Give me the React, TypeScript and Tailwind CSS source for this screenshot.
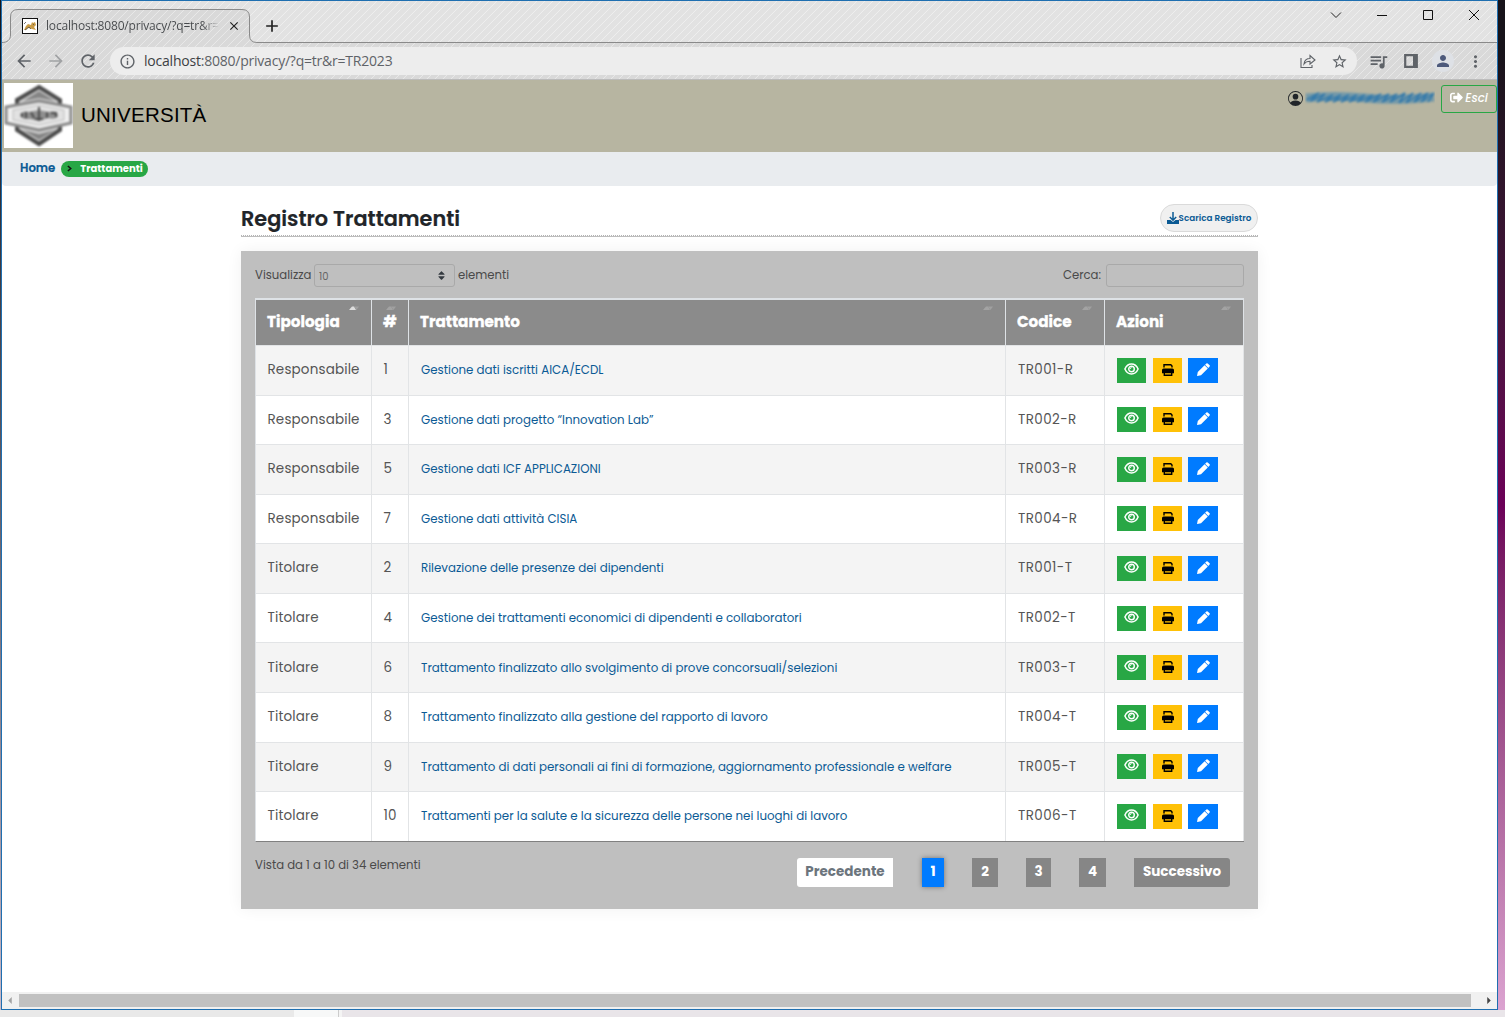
import React, { type ReactNode } from 'react';
import { BsPersonCircle } from 'react-icons/bs';
import { FaSignOutAlt, FaSort } from 'react-icons/fa';
import { MdArrowBack, MdArrowForward, MdRefresh, MdInfoOutline, MdStarBorder, MdQueueMusic, MdPerson, MdMoreVert, MdClose, MdAdd } from 'react-icons/md';

type Row = { kind: string; id: number; name: string; code: string };

const rows: Row[] = [
  { kind: 'Responsabile', id: 1, name: 'Gestione dati iscritti AICA/ECDL', code: 'TR001-R' },
  { kind: 'Responsabile', id: 3, name: 'Gestione dati progetto “Innovation Lab”', code: 'TR002-R' },
  { kind: 'Responsabile', id: 5, name: 'Gestione dati ICF APPLICAZIONI', code: 'TR003-R' },
  { kind: 'Responsabile', id: 7, name: 'Gestione dati attività CISIA', code: 'TR004-R' },
  { kind: 'Titolare', id: 2, name: 'Rilevazione delle presenze dei dipendenti', code: 'TR001-T' },
  { kind: 'Titolare', id: 4, name: 'Gestione dei trattamenti economici di dipendenti e collaboratori', code: 'TR002-T' },
  { kind: 'Titolare', id: 6, name: 'Trattamento finalizzato allo svolgimento di prove concorsuali/selezioni', code: 'TR003-T' },
  { kind: 'Titolare', id: 8, name: 'Trattamento finalizzato alla gestione del rapporto di lavoro', code: 'TR004-T' },
  { kind: 'Titolare', id: 9, name: 'Trattamento di dati personali ai fini di formazione, aggiornamento professionale e welfare', code: 'TR005-T' },
  { kind: 'Titolare', id: 10, name: 'Trattamenti per la salute e la sicurezza delle persone nei luoghi di lavoro', code: 'TR006-T' },
];

const grid = 'grid grid-cols-[116px_37px_597px_99px_139px]';

function SortMark({ active = false }: { active?: boolean }) {
  return (
    <svg viewBox="0 0 10 4" className="absolute right-[12px] top-[6px] h-[4px] w-[10px]">
      <path d="M0 4 L3 0.5 H5 L7 4Z" fill={active ? '#dedede' : '#a3a3a3'} />
      <path d="M5 0.5 H10 L7.5 4Z" fill="#a0a0a0" />
    </svg>
  );
}

function Head({ children, active }: { children: ReactNode; active?: boolean }) {
  return (
    <div className="relative flex items-center border-r border-[#dee2e6] bg-[#8b8b8b] pl-[11px] text-[15.2px] font-bold text-white [-webkit-text-stroke:0.3px_white]">
      {children}
      <SortMark active={active} />
    </div>
  );
}

function EyeIcon() {
  return (
    <svg viewBox="0 0 15 12" className="h-[12px] w-[15px]" fill="none" stroke="#fff">
      <path d="M0.9 6 C2.4 2.6 4.8 1 7.5 1 S12.6 2.6 14.1 6 C12.6 9.4 10.2 11 7.5 11 S2.4 9.4 0.9 6Z" strokeWidth="1.5" />
      <circle cx="7.5" cy="6" r="2.8" strokeWidth="1.4" />
      <path d="M6 6 A1.6 1.6 0 0 1 7.6 4.6" strokeWidth="1" />
    </svg>
  );
}

function PrintIcon() {
  return (
    <svg viewBox="0 0 12 12" className="h-[12px] w-[12px]">
      <path d="M2 3.4 V0.8 H8.8 L10 2 V3.4" fill="none" stroke="#000" strokeWidth="1.4" />
      <path d="M1.5 4.5 H10.5 Q12 4.5 12 6 V9.2 H0 V6 Q0 4.5 1.5 4.5Z" fill="#000" />
      <path d="M2.3 8.6 H9.7 V11.2 H2.3Z" fill="#ffc107" stroke="#000" strokeWidth="1.4" />
    </svg>
  );
}

function PencilIcon() {
  return (
    <svg viewBox="0 0 13 13" className="h-[13px] w-[13px]" fill="#fff">
      <path d="M7.6 2.2 L10.8 5.4 L4 12.2 L0.3 12.9 Q0 13 0.1 12.6 L0.8 9Z" />
      <path d="M8.1 1.7 L9.4 0.4 Q10 -0.1 10.7 0.4 L12.6 2.3 Q13.2 3 12.6 3.6 L11.3 4.9Z" />
    </svg>
  );
}

function TopBar() {
  return (
    <div className="h-[79px] shrink-0 border-b border-[#bcbcbc] bg-[#d9d9d9] bg-[repeating-linear-gradient(135deg,transparent_0px,transparent_4.2px,#e8e8e8_4.7px,#e8e8e8_5.1px,transparent_5.657px)] font-['Open_Sans',sans-serif]">
      <div className="relative flex h-[42px]">
        <svg viewBox="0 0 1495 42" className="absolute inset-0 h-[42px] w-[1495px]" fill="none">
          <path d="M0 41.5 C5 41.5 8.5 39 8.5 34 V16 Q8.5 8.5 16 8.5 H240 Q247.5 8.5 247.5 16 V34 Q247.5 41.5 255 41.5 H1495 V0 H0Z" fill="#fff" fillOpacity="0.25" />
          <path d="M0 41.5 C5 41.5 8.5 39 8.5 34 V16 Q8.5 8.5 16 8.5 H240 Q247.5 8.5 247.5 16 V34 Q247.5 41.5 255 41.5 H1495" stroke="#8a8a8a" />
        </svg>
        <div className="relative ml-[8px] mt-[8px] flex h-[34px] w-[240px] shrink-0 items-center pl-[12px]">
          <svg viewBox="0 0 16 16" className="size-4 shrink-0">
            <rect x="0.5" y="0.5" width="15" height="15" fill="#fff" stroke="#111" />
            <path d="M2 12 L4 8 L6 6 L9 7 L10 4 L11 5 L13 4 L14 7 L12 9 L14 12 L10 11 L6 10 L4 12Z" fill="#c99b45" />
            <path d="M2 6 L4 4 M3 12 L7 9 L9 11 M11 6 L12 7" stroke="#555" fill="none" strokeWidth="0.8" />
          </svg>
          <div className="ml-[8px] w-[173px] overflow-hidden whitespace-nowrap bg-linear-to-r from-[#45484b] from-90% to-transparent bg-clip-text text-[12px] tracking-[-0.18px] text-transparent">
            localhost:8080/privacy/?q=tr&amp;r=
          </div>
          <MdClose className="ml-[8px] size-[14px] shrink-0 text-[#222]" />
        </div>
        <div className="relative flex grow items-start">
          <MdAdd className="ml-[12px] mt-[15px] size-[20px] text-[#222]" />
          <div className="ml-auto flex items-center pr-[17px] pt-[8px]">
            <svg viewBox="0 0 12 12" className="size-3" fill="none" stroke="#222"><path d="M1 3.5 L6 8.5 L11 3.5" /></svg>
            <svg viewBox="0 0 12 12" className="ml-[34px] size-3" fill="none" stroke="#111"><path d="M1 6.5 H11" /></svg>
            <svg viewBox="0 0 12 12" className="ml-[34px] size-3" fill="none" stroke="#111"><path d="M1.5 1.5 H10.5 V10.5 H1.5Z" /></svg>
            <svg viewBox="0 0 12 12" className="ml-[34px] size-3" fill="none" stroke="#111"><path d="M1 1 L11 11 M11 1 L1 11" /></svg>
          </div>
        </div>
      </div>
      <div className="flex h-[36px] items-center pl-[12px] pr-[12px] text-[#5f6368]">
        <MdArrowBack className="size-[20px]" />
        <MdArrowForward className="ml-[12px] size-[20px] text-[#a0a2a4]" />
        <MdRefresh className="ml-[12px] size-[20px]" />
        <div className="ml-[12px] flex h-[28px] grow items-center rounded-full bg-[#ededed] pl-[9px] pr-[9px]">
          <MdInfoOutline className="size-[17px]" />
          <span className="ml-[8px] pb-px text-[14px] tracking-[-0.22px]"><span className="text-[#3c4043]">localhost</span>:8080/privacy/?q=tr&amp;r=TR2023</span>
          <svg viewBox="0 0 16 16" className="ml-auto size-4" fill="none" stroke="#5f6368" strokeWidth="1.1">
            <path d="M1 5 V14.5 H12 V12" /><path d="M4 11 C4.5 7 7 5.5 10 5.5 V2.5 L15 7 L10 11 V8.3 C7 8.3 5.5 9 4 11Z" />
          </svg>
          <MdStarBorder className="ml-[15px] size-[17px]" />
        </div>
        <MdQueueMusic className="ml-[11px] size-[21px]" />
        <svg viewBox="0 0 14 14" className="ml-[15px] size-[14px]"><path d="M1.2 1.2 H12.8 V12.8 H1.2Z" fill="none" stroke="#5f6368" strokeWidth="2.2" /><path d="M9 1 H13 V13 H9Z" fill="#5f6368" /></svg>
        <div className="ml-[14px] flex size-[22px] items-center justify-center rounded-full bg-[#dee1e6]"><MdPerson className="size-[18px] text-[#4d5a7c]" /></div>
        <MdMoreVert className="ml-[12px] size-[19px]" />
      </div>
    </div>
  );
}

function Crest() {
  return (
    <svg viewBox="0 0 69 65" className="h-[65px] w-[69px] bg-white">
      <g className="blur-[1px]">
        <path d="M35 4 L56 17 V47 L35 61 L13 47 V17Z" fill="#d5d5d5" stroke="#4a4a4a" strokeWidth="4" />
        <path d="M35 8 L51 18 L35 15 L19 18Z M35 57 L51 47 L35 51 L19 47Z" fill="#858585" />
        <path d="M2 24 L35 18 L67 24 V40 L35 47 L2 40Z" fill="#f0f0f0" stroke="#8c8c8c" strokeWidth="3.2" />
        <path d="M9 27 L35 22 L60 27 V37 L35 42 L9 37Z" fill="#e2e2e2" stroke="#bdbdbd" />
        <path d="M16 32 Q18 27 26 29 L35 27 L44 29 Q54 27 54 33 Q52 37 44 35 L35 38 L26 36 Q17 37 16 32Z" fill="#8f8f8f" />
        <path d="M18 30 V34 M22 29 V35 M27 29 L30 35 M35 24 V38 M31 36 H39 M43 29 V35 M47 30 H52 V34" stroke="#4c4c4c" strokeWidth="2" fill="none" />
      </g>
    </svg>
  );
}

function Scribble() {
  return (
    <svg viewBox="0 0 130 16" className="ml-[2px] h-[16px] w-[130px]" fill="none">
      <g className="blur-[0.8px]">
        <path d="M1 8 Q30 5 60 8 T129 7" stroke="#5f90ab" strokeWidth="9" opacity="0.75" />
        <path d="M1 10 L14 3 L5 11 L20 4 L12 12 L28 5 L20 12 L36 5 L28 12 L44 5 L36 12 L52 5 L44 12 L60 5 L52 12 L68 5 L60 12 L76 4 L68 12 L84 4 L77 12 L92 4 L85 12 L100 3 L94 13 L108 3 L101 13 L116 3 L109 12 L123 3 L116 12 L129 3 L123 12" stroke="#3178aa" strokeWidth="1.5" />
      </g>
    </svg>
  );
}

export default function App() {
  return (
    <div className="flex h-[1017px] w-[1505px] flex-col overflow-hidden bg-[#e9e5e9] font-['Poppins',Inter,sans-serif]">
      <div className="flex h-[1010px] bg-linear-to-b from-[#17131a] from-5% via-[#6c0058] via-50% to-[#dba3d0]">
        <div className="w-px bg-linear-to-b from-[#15151b] to-[#c9b9c8]" />
        <div className="flex w-[1497px] flex-col border border-[#1f6fb0] bg-white">
          <TopBar />
          <header className="flex h-[72px] shrink-0 items-start bg-[#b7b5a1] pl-[2px]">
            <div className="pt-[3px]"><Crest /></div>
            <span className="ml-[8px] mt-[20px] font-['Liberation_Sans',Arial,sans-serif] text-[20.5px] leading-[30px] tracking-[0.25px] text-black">UNIVERSITÀ</span>
            <div className="ml-auto flex pt-[5px]">
              <BsPersonCircle className="mt-[6px] size-[15px] text-[#212529]" />
              <div className="mr-px mt-[5px]"><Scribble /></div>
              <button className="ml-[5px] flex h-[28px] w-[56px] items-start justify-center rounded-[3px] border border-[#28a745] pt-[3px] text-[11.7px] font-medium italic leading-[18px] text-white">
                <FaSignOutAlt className="mr-[2px] mt-[2px] size-[13px]" />Esci
              </button>
            </div>
          </header>
          <nav className="flex h-[34px] shrink-0 items-center rounded-b-[4px] bg-[#e9ecef] pl-[18px] text-[#0b5a94]">
            <span className="text-[11.7px] font-semibold [-webkit-text-stroke:0.2px_#0b5a94]">Home</span>
            <span className="ml-[6px] flex h-[16px] w-[87px] items-center rounded-full bg-[#28a745] pl-[6px] text-[10px] font-bold text-white">
              <svg viewBox="0 0 6 8" className="mb-[2px] mr-[8px] h-[7px] w-[5px]" fill="none" stroke="#111" strokeWidth="1.8"><path d="M1 1 L4.5 4 L1 7" /></svg>
              <span className="pb-[2px]">Trattamenti</span>
            </span>
          </nav>
          <main className="flex grow flex-col pl-[239px]">
            <div className="mt-[18px] w-[1017px] border-b border-[#bdbdbd]">
              <div className="flex h-[32px] items-start justify-between border-b border-dotted border-[#b5b5b5]">
                <h1 className="text-[20.8px] font-semibold leading-[29px] text-[#212529] [-webkit-text-stroke:0.2px_#212529]">Registro Trattamenti</h1>
                <button className="flex h-[28px] w-[98px] shrink-0 items-center justify-center rounded-full border border-[#dadada] bg-[#f0f0f0] text-[8.8px] font-semibold text-[#0b5a94]">
                  <svg viewBox="0 0 12 12" className="mb-px h-[12px] w-[12px]"><path d="M0 8 H3.5 L6 10 L8.5 8 H12 V12 H0Z" fill="#0b5a94" /><path d="M6 0 V8 M2.8 5 L6 8.2 L9.2 5" fill="none" stroke="#0b5a94" strokeWidth="1.5" /></svg>
                  <span className="whitespace-nowrap pt-[2px]">Scarica Registro</span>
                </button>
              </div>
            </div>
            <section className="mt-[14px] flex h-[658px] w-[1017px] flex-col bg-[#bfbfbf] px-[14px] pt-[13px] shadow-[0_0_15px_rgba(0,0,0,0.06)]">
              <div className="flex h-[23px] items-center text-[11.68px] text-[#4a4a4a]">
                <span className="w-[56px] pt-px">Visualizza</span>
                <div className="ml-[3px] flex h-[23px] w-[141px] items-center justify-between rounded-[3px] border border-[#a9a9a9] pl-[4px] pr-[7px] text-[10px] text-[#666]"><span className="pt-px">10</span><FaSort className="size-[11px] text-[#343a40]" /></div>
                <span className="ml-[3px] pt-px">elementi</span>
                <span className="ml-auto pt-px">Cerca:</span>
                <div className="ml-[5px] h-[23px] w-[138px] rounded-[3px] border border-[#a9a9a9]" />
              </div>
              <div className="mt-[11px] w-[989px] border-b border-l border-b-[#808080] border-l-[#dee2e6]">
                <div className={`${grid} h-[47px] border-t-2 border-[#dee2e6]`}>
                  <Head active>Tipologia</Head>
                  <Head>#</Head>
                  <Head>Trattamento</Head>
                  <Head>Codice</Head>
                  <Head>Azioni</Head>
                </div>
                {rows.map((r) => (
                  <div key={r.code} className={`${grid} h-[49.57px] border-t border-[#e2e4e6] text-[13.5px] tracking-[0.15px] text-[#555] odd:bg-white even:bg-[#f4f4f4] *:flex *:items-center *:border-r *:border-[#e2e4e6]`}>
                    <div className="pl-[11.5px]">{r.kind}</div>
                    <div className="pl-[11.5px]">{r.id}</div>
                    <div className="pl-[12px] pt-[1.5px] text-[11.84px] tracking-normal text-[#0b5a94]">{r.name}</div>
                    <div className="pl-[12px] tracking-[0.4px]">{r.code}</div>
                    <div className="pl-[12px]">
                      <span className="flex h-[25px] w-[29px] items-start justify-center bg-[#28a745] pt-[5px]"><EyeIcon /></span>
                      <span className="ml-[7px] flex h-[25px] w-[29px] items-start justify-center bg-[#ffc107] pt-[6px]"><PrintIcon /></span>
                      <span className="ml-[6px] flex h-[25px] w-[30px] items-start justify-center bg-[#007bff] pt-[5px]"><PencilIcon /></span>
                    </div>
                  </div>
                ))}
              </div>
              <div className="flex items-start text-[11.7px] text-[#4a4a4a]">
                <span className="mt-[15px]">Vista da 1 a 10 di 34 elementi</span>
                <div className="ml-auto mr-[14px] mt-[16px] flex h-[29px] text-[13.5px] font-bold leading-[27px] text-white *:flex *:justify-center *:bg-[#868686]">
                  <span className="w-[96px] rounded-l-[3px] bg-white! text-[#6c757d]">Precedente</span>
                  <span className="ml-[29px] w-[22px] bg-[#007bff]! shadow-[0_0_5px_rgba(0,0,0,0.4)]">1</span>
                  <span className="ml-[28px] w-[26px]">2</span>
                  <span className="ml-[28px] w-[25px]">3</span>
                  <span className="ml-[28px] w-[27px]">4</span>
                  <span className="ml-[28px] w-[96px] rounded-r-[3px]">Successivo</span>
                </div>
              </div>
            </section>
          </main>
          <div className="flex h-[17px] shrink-0 items-center bg-[#f1f1f1]">
            <svg viewBox="0 0 4 8" className="ml-[6px] h-[7px] w-[4px]"><path d="M4 0 V8 L0 4Z" fill="#a3a3a3" /></svg>
            <div className="ml-[7px] h-[13px] w-[1452px] bg-[#c1c1c1]" />
            <svg viewBox="0 0 4 8" className="ml-[16px] h-[7px] w-[4px]"><path d="M0 0 V8 L4 4Z" fill="#444" /></svg>
          </div>
        </div>
      </div>
      <div className="flex h-[7px]">
        <div className="w-[294px] bg-[#e9e9e9]" />
        <div className="w-[45px] border-r border-[#ccc] bg-[#f7f8f8]" />
        <div className="w-[3px] bg-[#f4f4f4]" />
      </div>
    </div>
  );
}
